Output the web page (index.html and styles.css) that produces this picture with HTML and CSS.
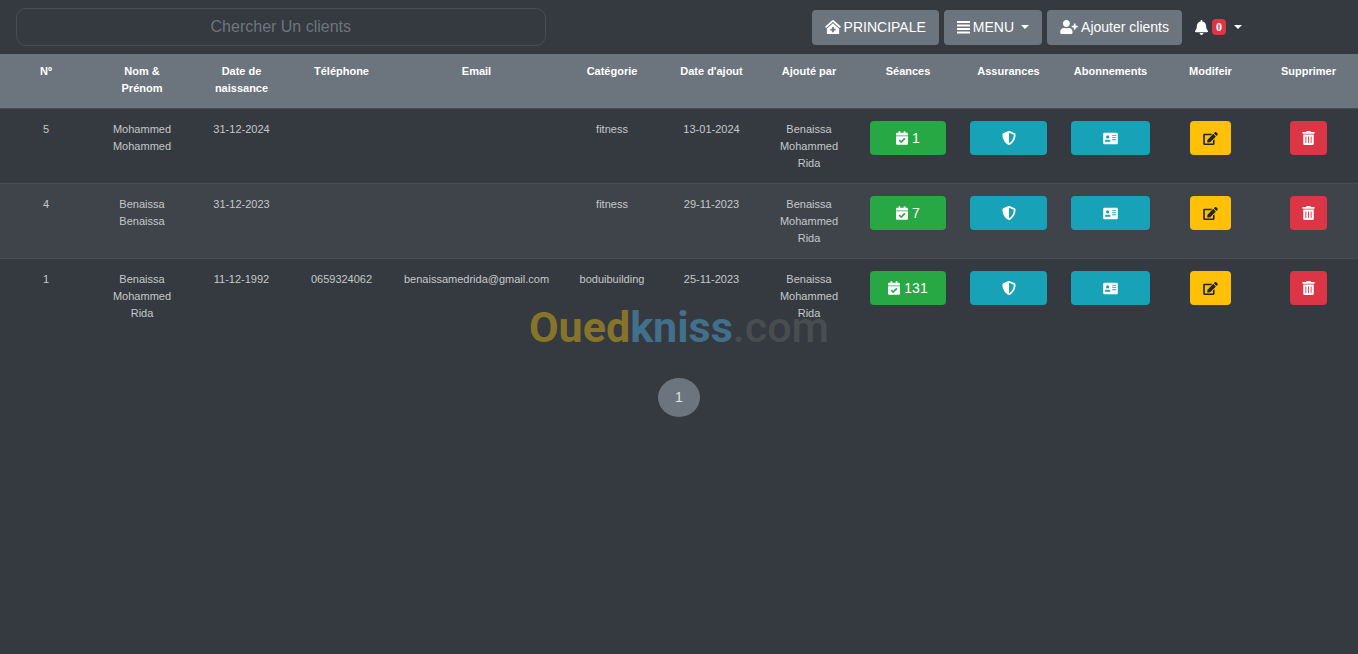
FILE: index.html
```html
<!DOCTYPE html>
<html lang="fr">
<head>
<meta charset="utf-8">
<meta name="viewport" content="width=device-width, initial-scale=1">
<title>Clients</title>
<link rel="stylesheet" href="styles.css">
</head>
<body>
<svg class="sprite" aria-hidden="true">
  <symbol id="i-home" viewBox="0 0 576 512"><path d="M288 115L69.47 307.71c-1.62 1.46-3.69 2.14-5.47 3.35V496a16 16 0 0 0 16 16h416a16 16 0 0 0 16-16V311.1c-1.7-1.16-3.72-1.82-5.26-3.2zm96 261a8 8 0 0 1-8 8h-56v56a8 8 0 0 1-8 8h-48a8 8 0 0 1-8-8v-56h-56a8 8 0 0 1-8-8v-48a8 8 0 0 1 8-8h56v-56a8 8 0 0 1 8-8h48a8 8 0 0 1 8 8v56h56a8 8 0 0 1 8 8zm186.69-139.72l-255.94-226a39.85 39.85 0 0 0-53.45 0l-256 226a16 16 0 0 0-1.21 22.6L25.5 282.7a16 16 0 0 0 22.6 1.21L277.42 81.63a16 16 0 0 1 21.17 0L527.91 283.9a16 16 0 0 0 22.6-1.21l21.4-23.82a16 16 0 0 0-1.22-22.59z"/></symbol>
  <symbol id="i-menu" viewBox="0 0 13 14"><path d="M.5 1h12a.5.5 0 0 1 .5.5v1a.5.5 0 0 1-.5.5H.5a.5.5 0 0 1-.5-.5v-1A.5.5 0 0 1 .5 1zm0 3.500h12a.5.5 0 0 1 .5.5v1a.5.5 0 0 1-.5.5H.5A.5.5 0 0 1 0 6V5a.5.5 0 0 1 .5-.5zm0 3.500h12a.5.5 0 0 1 .5.5v1a.5.5 0 0 1-.5.5H.5a.5.5 0 0 1-.5-.5v-1A.5.5 0 0 1 .5 8zm0 3.500h12a.5.5 0 0 1 .5.5v1a.5.5 0 0 1-.5.5H.5a.5.5 0 0 1-.5-.5v-1a.5.5 0 0 1 .5-.5z"/></symbol>
  <symbol id="i-user" viewBox="0 0 640 512"><path d="M624 208h-64v-64c0-8.800-7.200-16-16-16h-32c-8.800 0-16 7.200-16 16v64h-64c-8.800 0-16 7.200-16 16v32c0 8.800 7.200 16 16 16h64v64c0 8.800 7.200 16 16 16h32c8.800 0 16-7.200 16-16v-64h64c8.800 0 16-7.200 16-16v-32c0-8.800-7.200-16-16-16zm-400 48c70.700 0 128-57.300 128-128S294.700 0 224 0 96 57.300 96 128s57.300 128 128 128zm89.600 32h-16.700c-22.200 10.200-46.900 16-72.900 16s-50.600-5.800-72.900-16h-16.700C60.200 288 0 348.200 0 422.400V464c0 26.500 21.500 48 48 48h352c26.500 0 48-21.500 48-48v-41.600c0-74.200-60.200-134.400-134.400-134.400z"/></symbol>
  <symbol id="i-bell" viewBox="0 0 448 512"><path d="M224 512c35.320 0 63.970-28.650 63.970-64H160.030c0 35.350 28.650 64 63.970 64zm215.390-149.710c-19.320-20.760-55.470-51.990-55.470-154.290 0-77.700-54.480-139.900-127.940-155.160V32c0-17.670-14.320-32-31.980-32s-31.980 14.330-31.980 32v20.840C118.560 68.100 64.080 130.300 64.080 208c0 102.300-36.150 133.530-55.470 154.290-6 6.450-8.660 14.160-8.610 21.710.11 16.400 12.980 32 32.100 32h383.800c19.120 0 32-15.600 32.100-32 .05-7.550-2.610-15.270-8.610-21.710z"/></symbol>
  <symbol id="i-calendar" viewBox="0 0 448 512"><path d="M436 160H12c-6.600 0-12-5.400-12-12v-36c0-26.500 21.500-48 48-48h48V12c0-6.600 5.400-12 12-12h40c6.600 0 12 5.400 12 12v52h128V12c0-6.600 5.400-12 12-12h40c6.600 0 12 5.400 12 12v52h48c26.500 0 48 21.500 48 48v36c0 6.600-5.400 12-12 12zM12 192h424c6.600 0 12 5.400 12 12v260c0 26.500-21.500 48-48 48H48c-26.500 0-48-21.500-48-48V204c0-6.600 5.400-12 12-12zm333.300 95.900l-28.200-28.400c-4.700-4.700-12.300-4.700-17-.1L194 364.500l-46-46.400c-4.700-4.700-12.300-4.700-17-.1l-28.400 28.200c-4.700 4.700-4.700 12.300-.1 17l82.600 83.300c4.700 4.700 12.300 4.700 17 .1l143.100-142c4.700-4.600 4.700-12.200.1-16.900z"/></symbol>
  <symbol id="i-shield" viewBox="0 0 512 512"><path d="M466.500 83.700l-192-80a48.150 48.150 0 0 0-36.900 0l-192 80C27.700 91.100 16 108.600 16 128c0 198.500 114.500 335.700 221.500 380.300 11.800 4.900 25.100 4.900 36.900 0C360.100 472.600 496 349.300 496 128c0-19.400-11.700-36.900-29.500-44.300zM256.100 446.300l-.1-381 175.900 73.300c-3.300 151.400-82.100 261.100-175.800 307.700z"/></symbol>
  <symbol id="i-card" viewBox="0 0 576 512"><path fill-rule="evenodd" d="M48 32h480a48 48 0 0 1 48 48v352a48 48 0 0 1-48 48H48a48 48 0 0 1-48-48V80a48 48 0 0 1 48-48zm128 96a64 64 0 1 0 0 128 64 64 0 1 0 0-128zM86 384h180c12 0 22-9 22-19 0-34-30-61-67-61-14 0-20 8-45 8s-31-8-45-8c-37 0-67 27-67 61 0 10 10 19 22 19zM360 128h144a8 8 0 0 1 8 8v16a8 8 0 0 1-8 8H360a8 8 0 0 1-8-8v-16a8 8 0 0 1 8-8zm0 64h144a8 8 0 0 1 8 8v16a8 8 0 0 1-8 8H360a8 8 0 0 1-8-8v-16a8 8 0 0 1 8-8zm0 96h144a8 8 0 0 1 8 8v16a8 8 0 0 1-8 8H360a8 8 0 0 1-8-8v-16a8 8 0 0 1 8-8z"/></symbol>
  <symbol id="i-edit" viewBox="0 0 576 512"><path d="M402.600 83.200l90.200 90.200c3.800 3.800 3.800 10 0 13.800L274.400 405.600l-92.800 10.300c-12.400 1.400-22.900-9.100-21.500-21.500l10.300-92.800L388.800 83.200c3.800-3.800 10-3.800 13.800 0zm162-22.900l-48.800-48.800c-15.200-15.200-39.900-15.200-55.200 0l-35.400 35.400c-3.800 3.800-3.800 10 0 13.800l90.200 90.200c3.800 3.800 10 3.800 13.800 0l35.400-35.400c15.200-15.300 15.200-40 0-55.200zM384 346.200V448H64V128h229.800c3.200 0 6.200-1.300 8.500-3.500l40-40c7.600-7.600 2.200-20.500-8.500-20.500H48C21.500 64 0 85.500 0 112v352c0 26.500 21.500 48 48 48h352c26.500 0 48-21.500 48-48V306.200c0-10.700-12.900-16-20.500-8.500l-40 40c-2.200 2.300-3.500 5.300-3.500 8.500z"/></symbol>
  <symbol id="i-trash" viewBox="0 0 448 512"><path d="M32 464a48 48 0 0 0 48 48h288a48 48 0 0 0 48-48V128H32zm272-256a16 16 0 0 1 32 0v224a16 16 0 0 1-32 0zm-96 0a16 16 0 0 1 32 0v224a16 16 0 0 1-32 0zm-96 0a16 16 0 0 1 32 0v224a16 16 0 0 1-32 0zM432 32H312l-9.400-18.700A24 24 0 0 0 281.100 0H166.800a23.720 23.720 0 0 0-21.400 13.300L136 32H16A16 16 0 0 0 0 48v32a16 16 0 0 0 16 16h416a16 16 0 0 0 16-16V48a16 16 0 0 0-16-16z"/></symbol>
</svg>

<header class="topbar">
  <input class="search" type="text" placeholder="Chercher Un clients" aria-label="Chercher Un clients">
  <nav class="actions">
    <a class="btn btn-nav" href="#"><svg class="icon icon-home" aria-hidden="true"><use href="#i-home"/></svg>PRINCIPALE</a>
    <button class="btn btn-nav" type="button"><svg class="icon icon-menu" aria-hidden="true"><use href="#i-menu"/></svg>MENU<span class="caret"></span></button>
    <button class="btn btn-nav" type="button"><svg class="icon icon-user" aria-hidden="true"><use href="#i-user"/></svg>Ajouter clients</button>
    <button class="notif" type="button" aria-label="Notifications"><svg class="icon icon-bell" aria-hidden="true"><use href="#i-bell"/></svg><span class="badge">0</span><span class="caret"></span></button>
  </nav>
</header>

<main>
  <table class="clients">
    <colgroup>
      <col class="c-num"><col class="c-name"><col class="c-birth"><col class="c-phone"><col class="c-email"><col class="c-cat"><col class="c-added"><col class="c-by"><col class="c-sess"><col class="c-ins"><col class="c-sub"><col class="c-edit"><col class="c-del">
    </colgroup>
    <thead>
      <tr>
        <th scope="col">Nº</th><th scope="col">Nom &amp;<br>Prénom</th><th scope="col">Date de naissance</th><th scope="col">Téléphone</th><th scope="col">Email</th><th scope="col">Catégorie</th><th scope="col">Date d'ajout</th><th scope="col">Ajouté par</th><th scope="col">Séances</th><th scope="col">Assurances</th><th scope="col">Abonnements</th><th scope="col">Modifeir</th><th scope="col">Supprimer</th>
      </tr>
    </thead>
    <tbody>
      <tr>
        <td>5</td><td>Mohammed Mohammed</td><td>31-12-2024</td><td></td><td></td><td>fitness</td><td>13-01-2024</td><td>Benaissa Mohammed Rida</td>
        <td><button class="btn btn-row btn-green" type="button"><svg class="icon icon-calendar" aria-hidden="true"><use href="#i-calendar"/></svg>1</button></td>
        <td><button class="btn btn-row btn-teal" type="button" aria-label="Assurances"><svg class="icon icon-shield" aria-hidden="true"><use href="#i-shield"/></svg></button></td>
        <td><button class="btn btn-row btn-teal" type="button" aria-label="Abonnements"><svg class="icon icon-wide" aria-hidden="true"><use href="#i-card"/></svg></button></td>
        <td><button class="btn btn-small btn-yellow" type="button" aria-label="Modifier"><svg class="icon icon-wide" aria-hidden="true"><use href="#i-edit"/></svg></button></td>
        <td><button class="btn btn-small btn-red" type="button" aria-label="Supprimer"><svg class="icon icon-trash" aria-hidden="true"><use href="#i-trash"/></svg></button></td>
      </tr>
      <tr>
        <td>4</td><td>Benaissa Benaissa</td><td>31-12-2023</td><td></td><td></td><td>fitness</td><td>29-11-2023</td><td>Benaissa Mohammed Rida</td>
        <td><button class="btn btn-row btn-green" type="button"><svg class="icon icon-calendar" aria-hidden="true"><use href="#i-calendar"/></svg>7</button></td>
        <td><button class="btn btn-row btn-teal" type="button" aria-label="Assurances"><svg class="icon icon-shield" aria-hidden="true"><use href="#i-shield"/></svg></button></td>
        <td><button class="btn btn-row btn-teal" type="button" aria-label="Abonnements"><svg class="icon icon-wide" aria-hidden="true"><use href="#i-card"/></svg></button></td>
        <td><button class="btn btn-small btn-yellow" type="button" aria-label="Modifier"><svg class="icon icon-wide" aria-hidden="true"><use href="#i-edit"/></svg></button></td>
        <td><button class="btn btn-small btn-red" type="button" aria-label="Supprimer"><svg class="icon icon-trash" aria-hidden="true"><use href="#i-trash"/></svg></button></td>
      </tr>
      <tr>
        <td>1</td><td>Benaissa Mohammed Rida</td><td>11-12-1992</td><td>0659324062</td><td class="email">benaissamedrida@gmail.com</td><td>boduibuilding</td><td>25-11-2023</td><td>Benaissa Mohammed Rida</td>
        <td><button class="btn btn-row btn-green" type="button"><svg class="icon icon-calendar" aria-hidden="true"><use href="#i-calendar"/></svg>131</button></td>
        <td><button class="btn btn-row btn-teal" type="button" aria-label="Assurances"><svg class="icon icon-shield" aria-hidden="true"><use href="#i-shield"/></svg></button></td>
        <td><button class="btn btn-row btn-teal" type="button" aria-label="Abonnements"><svg class="icon icon-wide" aria-hidden="true"><use href="#i-card"/></svg></button></td>
        <td><button class="btn btn-small btn-yellow" type="button" aria-label="Modifier"><svg class="icon icon-wide" aria-hidden="true"><use href="#i-edit"/></svg></button></td>
        <td><button class="btn btn-small btn-red" type="button" aria-label="Supprimer"><svg class="icon icon-trash" aria-hidden="true"><use href="#i-trash"/></svg></button></td>
      </tr>
    </tbody>
  </table>
  <nav class="pager" aria-label="Pages"><a class="page" href="#">1</a></nav>
</main>

<div class="watermark"><span class="wm-gold">Oued</span><span class="wm-blue">kniss</span><span class="wm-gray">.com</span></div>
</body>
</html>
```

FILE: styles.css
```css
* {
  box-sizing: border-box;
}

body {
  position: relative;
  min-height: 100vh;
  margin: 0;
  background: #343a40;
  color: #fff;
  font-family: "Liberation Sans", Arial, sans-serif;
}

.sprite {
  display: none;
}

.icon {
  flex: none;
  height: 14px;
  fill: currentColor;
}

.icon-home { width: 16px; }
.icon-menu { width: 13px; }
.icon-user { width: 18px; }
.icon-bell { width: 13px; height: 15px; }
.icon-calendar { width: 12px; }
.icon-shield { width: 14px; }
.icon-trash { width: 13px; }
.icon-wide { width: 15px; height: 13px; }

.topbar {
  display: flex;
  align-items: center;
  justify-content: space-between;
  padding: 8px 116px 8px 16px;
}

.search {
  width: 39vw;
  height: 38px;
  padding: 6px 12px;
  border: 1px solid #454d55;
  border-radius: 10px;
  background: transparent;
  color: #fff;
  font: inherit;
  font-size: 16px;
  text-align: center;
}

.search::placeholder {
  color: #6c757d;
  opacity: 1;
}

.actions {
  display: flex;
  align-items: center;
  gap: 5px;
}

.btn {
  display: inline-flex;
  align-items: center;
  justify-content: center;
  border: 0;
  border-radius: 4px;
  color: #fff;
  font-family: inherit;
  line-height: 20px;
  text-decoration: none;
  white-space: nowrap;
  cursor: pointer;
}

.btn-nav {
  gap: 3px;
  height: 35px;
  padding: 0 13px;
  background: #6c757d;
  font-size: 14px;
}

.caret {
  margin-left: 4px;
  border-top: 4px solid #fff;
  border-right: 4px solid transparent;
  border-left: 4px solid transparent;
}

.notif {
  display: inline-flex;
  align-items: center;
  gap: 4px;
  margin-left: 8px;
  padding: 0;
  border: 0;
  background: none;
  color: #fff;
  cursor: pointer;
}

.badge {
  padding: 0 4px;
  border-radius: 4px;
  background: #dc3545;
  font: bold 12px/16px "Liberation Serif", serif;
}

.clients {
  width: 100%;
  border-collapse: collapse;
  table-layout: fixed;
  font-size: 11px;
  line-height: 17px;
  text-align: center;
}

.c-num { width: 92px; }
.c-name { width: 100px; }
.c-birth { width: 99px; }
.c-phone { width: 101px; }
.c-email { width: 169px; }
.c-cat { width: 102px; }
.c-added { width: 97px; }
.c-by { width: 98px; }
.c-sess { width: 100px; }
.c-ins { width: 101px; }
.c-sub { width: 103px; }
.c-edit { width: 97px; }
.c-del { width: 99px; }

.clients th {
  padding: 9px 12px 11px;
  background: #6c757d;
  vertical-align: top;
}

.clients td {
  padding: 12px 12px 11px;
  border-top: 1px solid #454d55;
  color: #c6c8ca;
  vertical-align: top;
}

.clients tbody tr:nth-child(even) {
  background: #3e444a;
}

.clients .email {
  white-space: nowrap;
}

.btn-row,
.btn-small {
  gap: 4px;
  height: 34px;
  font-size: 14px;
  vertical-align: top;
}

.btn-row {
  width: 100%;
  padding: 0;
}

.btn-small {
  padding: 0 12px;
}

.btn-small.btn-yellow {
  padding: 0 13px;
}

.btn-green { background: #28a745; }
.btn-teal { background: #17a2b8; }
.btn-yellow { background: #ffc107; color: #212529; }
.btn-red { background: #dc3545; }

.pager {
  display: flex;
  justify-content: center;
  margin-top: 45px;
}

.page {
  width: 42px;
  border-radius: 50%;
  background: #6c757d;
  color: #dee2e6;
  font-size: 14px;
  line-height: 39px;
  text-align: center;
  text-decoration: none;
}

.watermark {
  position: absolute;
  top: 50%;
  left: 50%;
  transform: translate(-50%, -50%);
  font: bold 43px/48px Roboto, sans-serif;
  pointer-events: none;
}

.wm-gold { color: #85742a; }
.wm-blue { color: #42708a; }

.wm-gray {
  color: #4a4d50;
  font-weight: 500;
}
```
